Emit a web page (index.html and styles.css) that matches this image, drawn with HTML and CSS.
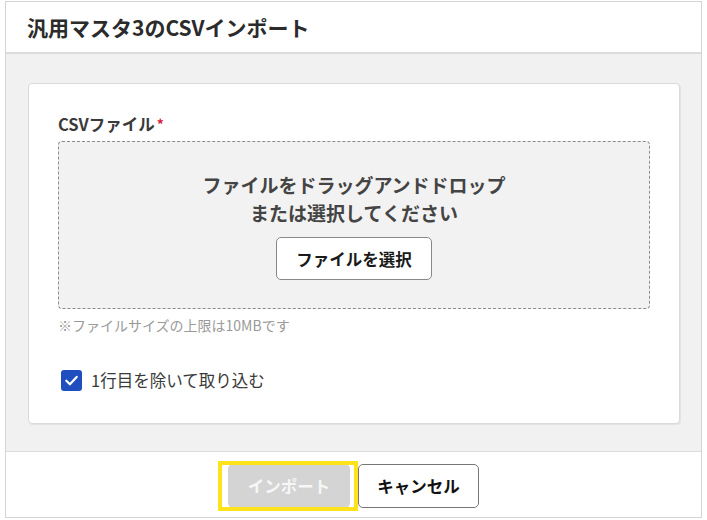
FILE: index.html
```html
<!DOCTYPE html>
<html lang="ja">
<head>
    <meta charset="UTF-8">
    <meta name="viewport" content="width=device-width, initial-scale=1.0">
    <title>汎用マスタ3のCSVインポート</title>
    <link rel="stylesheet" href="styles.css">
</head>
<body>
    <div class="dialog">
        <div class="dialog-header">
            <h1>汎用マスタ3のCSVインポート</h1>
        </div>

        <div class="dialog-body">
            <div class="card">
                <div class="field-label">CSVファイル<span class="required">*</span></div>
                <div class="dropzone">
                    <p>ファイルをドラッグアンドドロップ<br>または選択してください</p>
                    <button class="btn btn-select">ファイルを選択</button>
                </div>
                <div class="note">※ファイルサイズの上限は10MBです</div>

                <label class="check-row">
                    <span class="checkbox">
                        <svg width="15" height="15" viewBox="0 0 16 16">
                            <path d="M2.5 8.3 L6.3 12 L13.5 4.2" fill="none" stroke="#fff" stroke-width="2.4" stroke-linecap="round" stroke-linejoin="round"/>
                        </svg>
                    </span>
                    1行目を除いて取り込む
                </label>
            </div>
        </div>

        <div class="dialog-footer">
            <div class="highlight">
                <button class="btn btn-import" disabled>インポート</button>
            </div>
            <button class="btn btn-cancel">キャンセル</button>
        </div>
    </div>
</body>
</html>
```

FILE: styles.css
```css
body {
    margin: 0;
    background-color: white;
    font-family: "Noto Sans CJK JP", "Noto Sans", sans-serif;
    color: #333;
}
.dialog {
    width: 695px;
    margin: 1px 0 0 5px;
    border: 1px solid #d4d4d4;
    background-color: white;
}
.dialog-header {
    height: 50px;
    padding: 0 21px;
    display: flex;
    align-items: center;
    border-bottom: 2px solid #dcdcdc;
}
.dialog-header h1 {
    margin: 0;
    font-size: 21px;
    font-weight: bold;
    line-height: 28px;
    color: #2b2b2b;
}
.dialog-body {
    background-color: #f1f1f1;
    padding: 29px 21px 27px 22px;
    border-bottom: 1px solid #dcdcdc;
}
.card {
    background-color: white;
    border: 1px solid #dadada;
    border-radius: 4px;
    box-shadow: 1px 1px 1px rgba(0,0,0,0.06);
    padding: 28px 29px 31px 29px;
}
.field-label {
    font-size: 16.5px;
    font-weight: bold;
    line-height: 24px;
    color: #3a3a3a;
    margin-bottom: 5px;
}
.required {
    color: #d81b3c;
    margin-left: 2px;
    font-size: 14px;
    vertical-align: top;
}
.dropzone {
    background-color: #f2f2f2;
    border: 1px dashed #8c8c8c;
    border-radius: 4px;
    padding: 29px 0 28px;
    display: flex;
    flex-direction: column;
    align-items: center;
}
.dropzone p {
    margin: 0;
    font-size: 19px;
    font-weight: bold;
    line-height: 28px;
    text-align: center;
    color: #444;
}
.btn {
    font-family: "Noto Sans CJK JP", "Noto Sans", sans-serif;
    font-size: 16.5px;
    font-weight: bold;
    height: 44px;
    border-radius: 5px;
    cursor: pointer;
}
.btn-select {
    margin-top: 10px;
    width: 156px;
    height: 43px;
    background-color: white;
    border: 1px solid #888;
    color: #1a1a1a;
}
.note {
    margin-top: 6px;
    font-size: 14px;
    line-height: 20px;
    color: #9a9a9a;
}
.check-row {
    margin-top: 33px;
    margin-left: 3px;
    display: flex;
    align-items: center;
    gap: 9px;
    font-size: 16.5px;
    line-height: 24px;
    color: #3a3a3a;
}
.checkbox {
    width: 21px;
    height: 21px;
    border-radius: 3px;
    background-color: #1f4fbf;
    display: flex;
    align-items: center;
    justify-content: center;
}
.dialog-footer {
    padding: 12px 0 9px;
    display: flex;
    justify-content: center;
    gap: 8px;
}
.highlight {
    position: relative;
    display: flex;
}
.highlight::after {
    content: "";
    position: absolute;
    top: -3px;
    bottom: -3px;
    left: -10px;
    right: -8px;
    border: 4px solid #ffe31a;
}
.btn-import {
    width: 122px;
    background-color: #d4d4d4;
    border: none;
    color: #f7f7f7;
    cursor: default;
}
.btn-cancel {
    width: 121px;
    background-color: white;
    border: 1px solid #777;
    color: #111;
}
```
